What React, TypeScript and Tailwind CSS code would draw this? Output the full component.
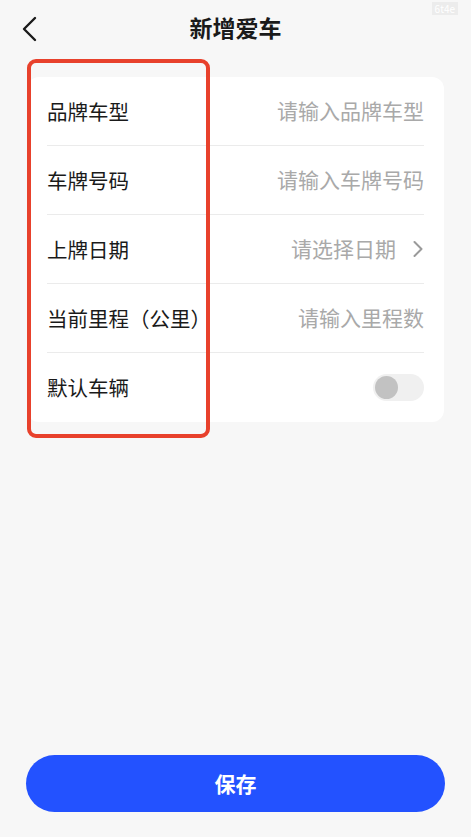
import React, { useState } from "react";

const rows = [
  { label: "品牌车型", placeholder: "请输入品牌车型" },
  { label: "车牌号码", placeholder: "请输入车牌号码" },
  { label: "上牌日期", placeholder: "请选择日期", arrow: true },
  { label: "当前里程（公里）", placeholder: "请输入里程数" },
];

const App: React.FC = () => {
  const [isDefault, setIsDefault] = useState(false);

  return (
    <div
      className="relative flex h-[837px] w-[471px] flex-col overflow-hidden bg-[#f7f7f7]"
      style={{ fontFamily: '"Noto Sans CJK SC", "Noto Sans", sans-serif' }}
    >
      {/* header */}
      <div className="relative flex h-[58px] items-center justify-center pb-[4px]">
        <button className="absolute left-[20px] top-[16px] p-0">
          <svg width="20" height="26" viewBox="0 0 20 26" fill="none">
            <path d="M15 2 L4 13 L15 24" stroke="#1a1a1a" strokeWidth="2.4" strokeLinecap="round" strokeLinejoin="round" />
          </svg>
        </button>
        <h1 className="text-[23px] font-bold text-[#1a1a1a]">新增爱车</h1>
        <span className="absolute right-[13px] top-[2px] bg-[#ececec] px-[3px] text-[10px] leading-[13px] text-white">
          6t4e
        </span>
      </div>

      {/* form card */}
      <div className="mx-[27px] mt-[19px] rounded-[12px] bg-white px-[20px]">
        {rows.map((r) => (
          <div
            key={r.label}
            className="flex h-[69px] items-center justify-between border-b border-[#ebebeb]"
          >
            <span className="text-[20.5px] text-[#1a1a1a]">{r.label}</span>
            <div className="flex items-center gap-[16px]">
              <span className="text-[21px] text-[#a9a9a9]">{r.placeholder}</span>
              {r.arrow && (
                <svg width="12" height="18" viewBox="0 0 12 18" fill="none">
                  <path d="M2.5 2 L9.5 9 L2.5 16" stroke="#9a9a9a" strokeWidth="2" strokeLinecap="round" strokeLinejoin="round" />
                </svg>
              )}
            </div>
          </div>
        ))}
        <div className="flex h-[69px] items-center justify-between">
          <span className="text-[20.5px] text-[#1a1a1a]">默认车辆</span>
          <button
            onClick={() => setIsDefault(!isDefault)}
            className="flex h-[27px] w-[51px] items-center rounded-full bg-[#f0f0f0] px-[2px]"
          >
            <span className="h-[23px] w-[23px] rounded-full bg-[#c2c2c2]" />
          </button>
        </div>
      </div>

      <div className="flex-1" />

      {/* save button */}
      <div className="px-[26px] pb-[25px]">
        <button className="flex h-[57px] w-full items-center justify-center rounded-full bg-[#2352ff] text-[21px] font-bold text-white">
          保存
        </button>
      </div>

      {/* annotation box */}
      <div className="pointer-events-none absolute left-[27px] top-[59px] h-[379px] w-[183px] rounded-[9px] border-[4px] border-[#e8412c]" />
    </div>
  );
};

export default App;
